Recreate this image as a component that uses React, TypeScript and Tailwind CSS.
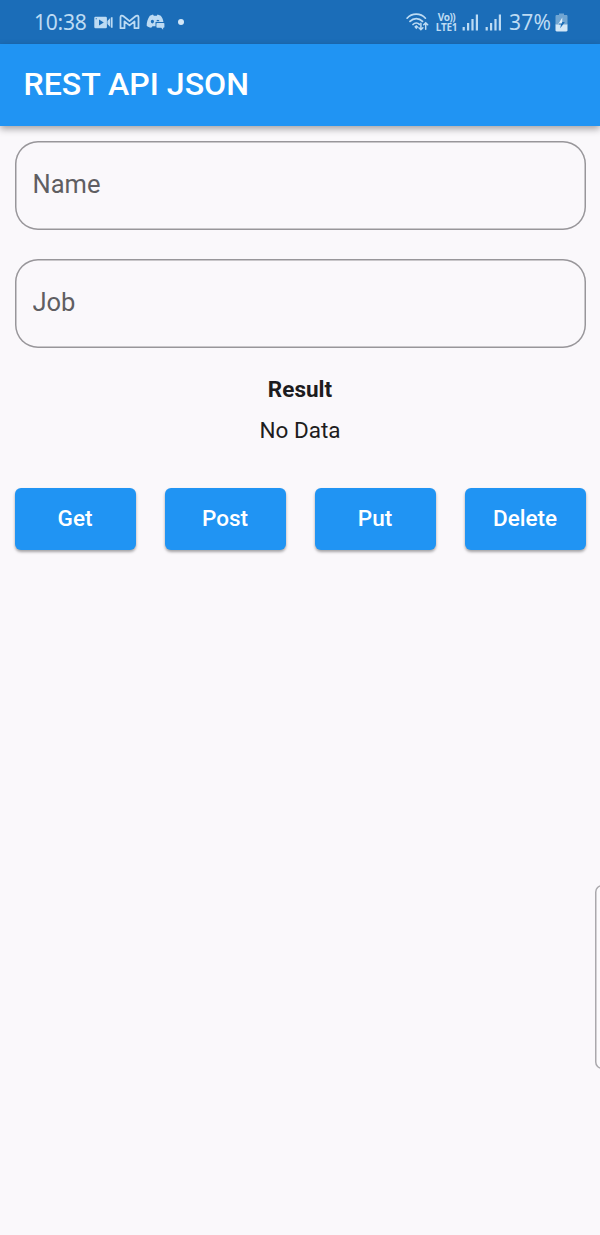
import React from 'react';

function VideoIcon() {
  return (
    <svg className="ml-[8px] shrink-0" width="19" height="13" viewBox="0 0 19 13">
      <path fill="currentColor" fillRule="evenodd" d="M1.500.8h10.200a1.200 1.200 0 0 1 1.200 1.200v9a1.200 1.200 0 0 1-1.200 1.200H1.500A1.200 1.200 0 0 1 .3 11V2A1.200 1.200 0 0 1 1.500.8ZM5 3.600v5.800l4.800-2.900ZM1.700 2.200v1.100h1.100V2.200Z" />
      <path fill="currentColor" d="M13.400 5 16.200 2v9L13.400 8ZM16.900 1.300h1.700v10.400h-1.700Z" />
    </svg>
  );
}

function MailIcon() {
  return (
    <svg className="ml-[6px] shrink-0" width="21" height="16" viewBox="0 0 21 16" fill="none" stroke="currentColor" strokeWidth="1.800" strokeLinejoin="round">
      <path d="M1.500 14.200V3.200C1.500 1.400 3.200 1.200 4.500 2.200l6 4.900 6-4.900c1.300-1 3-.8 3 1v11h-4V7.400l-5 4-5-4v6.800Z" />
    </svg>
  );
}

function DiscordIcon() {
  return (
    <svg className="ml-[6px] shrink-0" width="19" height="16" viewBox="0 0 19 16">
      <path fill="currentColor" fillRule="evenodd" d="M3.800 1.800 7 .5l.8 1.200h3L11.600.5l3.200 1.300c1.500 2 2.500 4.200 2.600 6.200H9.500v4.200H6.500l-1.300 1.600C3.200 13.500 1.700 12.700.7 11.700.6 8.300 1.600 5.200 3.800 1.800ZM6.400 5.800a1.600 1.800 0 1 0 0 3.600A1.600 1.800 0 0 0 6.400 5.800Zm5.500 0a1.500 1.500 0 0 0-1.500 1.500h3A1.500 1.500 0 0 0 11.900 5.800Z" />
      <path fill="currentColor" d="M11.300 9h6.200c.6 0 .9.300.9.800v3.200c0 .5-.3.8-.9.8h-.4v2l-1.900-2h-3.900c-.6 0-.9-.3-.9-.8V9.800c0-.5.300-.8.900-.8Z" />
    </svg>
  );
}

function WifiIcon() {
  return (
    <svg className="shrink-0" width="23" height="20" viewBox="0 0 23 20" fill="none" stroke="currentColor" strokeWidth="1.700" strokeLinecap="round">
      <path d="M1.100 6.200C5.900.8 14.600.8 19.400 6.200M4 9.400c3.500-3.700 9-3.700 12.500 0M7 12.500c1.800-1.900 4.600-2 6.400-.2" />
      <path fill="currentColor" stroke="none" d="m8.200 14.800 2.100-1.800 2.100 1.800-2.100 2.400Z" />
      <path strokeWidth="1.500" d="M14.900 11.300v6.500m-2-2 2 2 2-2M19.700 17.300v-6.500m-2 2 2-2 2 2" />
    </svg>
  );
}

function SignalIcon() {
  return (
    <svg className="shrink-0" width="17" height="18" viewBox="0 0 17 18" fill="currentColor">
      <path d="M.6 14h2.200v3.500H.6ZM5 10h2.200v7.500H5ZM9.400 6h2.200v11.500H9.400ZM13.800 1.500H16v16h-2.200Z" />
    </svg>
  );
}

function BatteryIcon() {
  return (
    <svg className="shrink-0" width="13" height="19" viewBox="0 0 13 19">
      <path fill="#70a5d2" d="M4 .5h5V2h2.300c.7 0 1.200.5 1.200 1.200V12H.5V3.200C.5 2.500 1 2 1.700 2H4Z" />
      <path fill="#d3e7f7" d="M.5 11.500h12v5.800c0 .7-.5 1.200-1.200 1.200H1.700c-.7 0-1.200-.5-1.200-1.200Z" />
      <path fill="#e2f0fb" d="M7.300 4.500 3 11.500h3L10 9H7.200Z" />
      <path fill="#1b6db8" d="M7.200 9H10L5.200 15.200l.8-3.700H3.500l.7-1.100h2.400Z" />
    </svg>
  );
}

function StatusBar() {
  return (
    <header className="flex h-[44px] items-center bg-[#1b6db8] pr-[32px] pl-[34px] text-[#bddbf3]">
      <span className="w-[52px] font-['Noto_Sans',sans-serif] text-[21px] leading-none tracking-[-0.2px] whitespace-nowrap">10:38</span>
      <VideoIcon />
      <MailIcon />
      <DiscordIcon />
      <span className="ml-[13px] size-[6px] rounded-full bg-[#d3e7f7]" />
      <div className="ml-auto flex items-center">
        <WifiIcon />
        <div className="ml-[6px] flex w-[23px] flex-col items-center font-['Noto_Sans',sans-serif] text-[10px] leading-[10px] font-bold">
          <span className="tracking-[-0.5px]">Vo))</span>
          <span className="tracking-[-0.3px]">LTE1</span>
        </div>
        <div className="ml-[4px] flex gap-[6px]">
          <SignalIcon />
          <SignalIcon />
        </div>
        <span className="ml-[7px] w-[46px] font-['Noto_Sans',sans-serif] text-[21px] leading-none tracking-[0.3px] whitespace-nowrap">37%</span>
        <BatteryIcon />
      </div>
    </header>
  );
}

function Field({ label }: { label: string }) {
  return (
    <input
      aria-label={label}
      placeholder={label}
      className="h-[89px] w-full rounded-[23px] bg-transparent px-[18px] pb-[3px] text-[25.500px] text-[#5f5e62] shadow-[inset_0_0_0_1.500px_#98969a] outline-none placeholder:text-[#5f5e62]"
    />
  );
}

const actions = ['Get', 'Post', 'Put', 'Delete'];

export default function App() {
  return (
    <div className="relative h-[1235px] w-[600px] overflow-hidden bg-[#faf8fb] font-[Roboto,sans-serif] text-[#1d1c20]">
      <StatusBar />
      <div className="flex h-[82px] items-center bg-[#2094f3] pb-[2px] pl-[23.500px] shadow-[0_3px_7px_rgba(0,0,0,0.35)]">
        <h1 className="text-[32.100px] leading-none font-medium whitespace-nowrap text-white">REST API JSON</h1>
      </div>
      <main className="flex flex-col px-[14.500px] pt-[15px]">
        <div className="flex flex-col gap-[29px]">
          <Field label="Name" />
          <Field label="Job" />
        </div>
        <div className="mt-[26px] flex flex-col items-center gap-[11px] text-[22.500px] leading-[30px]">
          <h2 className="font-bold">Result</h2>
          <p>No Data</p>
        </div>
        <div className="mt-[42.500px] grid grid-cols-4 gap-[29px]">
          {actions.map((action) => (
            <button
              key={action}
              className="h-[62.500px] rounded-[6px] bg-[#2094f3] text-[22.500px] font-medium text-white shadow-[0_2px_3px_rgba(0,0,0,0.35)]"
            >
              {action}
            </button>
          ))}
        </div>
      </main>
      <div className="absolute top-[885px] left-[595px] h-[184px] w-[20px] rounded-[7px] bg-[#fbfafc] shadow-[inset_0_0_0_1.500px_#aaa8ac]" />
    </div>
  );
}
